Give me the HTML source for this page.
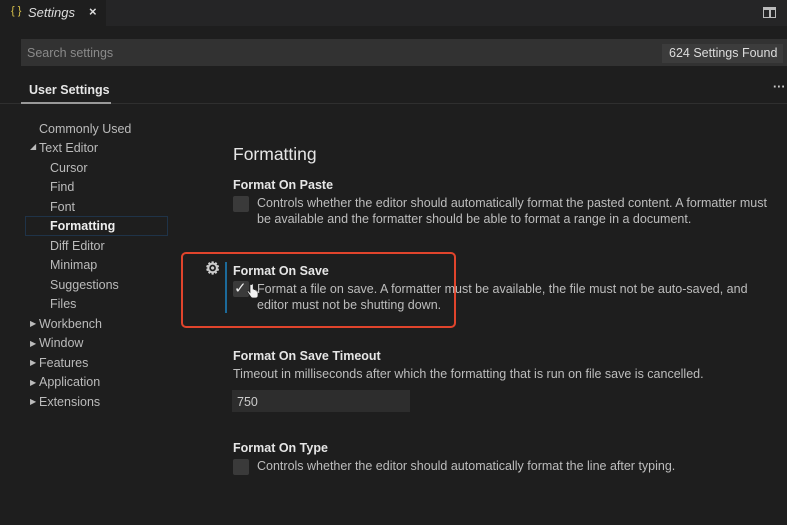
<!DOCTYPE html>
<html><head><style>
*{margin:0;padding:0;box-sizing:border-box}
body{width:787px;height:525px;background:#1e1e1e;font-family:"Liberation Sans",sans-serif;color:#ccc;position:relative;overflow:hidden;font-size:12.5px}
.a{position:absolute;white-space:nowrap}
.tabs{position:absolute;left:0;top:0;width:787px;height:26px;background:#252526}
.tab{position:absolute;left:0;top:0;width:106px;height:26px;background:#1e1e1e}
.nav .a{color:#bbb}
.cb{position:absolute;width:16px;height:16px;background:#3a3a3a;border-radius:2px}
.t{font-weight:bold;color:#e6e6e6}
.d{color:#bdbdbd;line-height:16px}
</style></head><body>
<div class="tabs"><div class="tab"></div>
<span class="a" style="left:11px;top:5px;color:#d7c04a;font-size:11px">{ }</span>
<span class="a" style="left:28px;top:5px;font-style:italic;color:#ddd;font-size:13px">Settings</span>
<span class="a" style="left:89px;top:4px;color:#ddd;font-size:13px;font-weight:bold">×</span>
<div class="a" style="left:763px;top:7px;width:13px;height:11px;border:1.5px solid #bbb;border-top-width:3px"></div>
<div class="a" style="left:769px;top:8px;width:1.5px;height:9px;background:#bbb"></div>
</div>
<div class="a" style="left:21px;top:39px;width:766px;height:27px;background:#323232"></div>
<span class="a" style="left:27px;top:46px;color:#8a8a8a;font-size:12.5px">Search settings</span>
<div class="a" style="left:662px;top:44px;width:121px;height:19px;background:#3c3c3c"></div>
<span class="a" style="left:669px;top:46px;color:#ddd;font-size:12.5px">624 Settings Found</span>
<span class="a" style="left:29px;top:83px;color:#e6e6e6;font-weight:bold;font-size:12.5px">User Settings</span>
<div class="a" style="left:0;top:103px;width:787px;height:1px;background:#2f2f2f"></div>
<div class="a" style="left:21px;top:102px;width:90px;height:2px;background:#999"></div>
<span class="a" style="left:773px;top:80px;color:#ccc;font-weight:bold">···</span>
<div class="a" style="left:25px;top:216px;width:143px;height:20px;border:1px solid #1f3348"></div>
<div class="nav">
<span class="a" style="left:39px;top:122px">Commonly Used</span>
<span class="a" style="left:30px;top:142px;font-size:8px">◢</span>
<span class="a" style="left:39px;top:141px">Text Editor</span>
<span class="a" style="left:50px;top:161px">Cursor</span>
<span class="a" style="left:50px;top:180px">Find</span>
<span class="a" style="left:50px;top:200px">Font</span>
<span class="a" style="left:50px;top:219px;font-weight:bold;color:#eee">Formatting</span>
<span class="a" style="left:50px;top:239px">Diff Editor</span>
<span class="a" style="left:50px;top:258px">Minimap</span>
<span class="a" style="left:50px;top:278px">Suggestions</span>
<span class="a" style="left:50px;top:297px">Files</span>
<span class="a" style="left:30px;top:319px;font-size:8px">▶</span><span class="a" style="left:39px;top:317px">Workbench</span>
<span class="a" style="left:30px;top:339px;font-size:8px">▶</span><span class="a" style="left:39px;top:336px">Window</span>
<span class="a" style="left:30px;top:358px;font-size:8px">▶</span><span class="a" style="left:39px;top:356px">Features</span>
<span class="a" style="left:30px;top:378px;font-size:8px">▶</span><span class="a" style="left:39px;top:375px">Application</span>
<span class="a" style="left:30px;top:397px;font-size:8px">▶</span><span class="a" style="left:39px;top:395px">Extensions</span>
</div>
<span class="a" style="left:233px;top:144px;font-size:17.5px;color:#e6e6e6">Formatting</span>
<span class="a t" style="left:233px;top:178px">Format On Paste</span>
<div class="cb" style="left:233px;top:196px"></div>
<div class="a d" style="left:257px;top:195px">Controls whether the editor should automatically format the pasted content. A formatter must<br>be available and the formatter should be able to format a range in a document.</div>
<div class="a" style="left:181px;top:252px;width:275px;height:76px;border:2px solid #e0442c;border-radius:5px"></div>
<span class="a" style="left:205px;top:259px;font-size:17px;color:#ccc;font-weight:bold">⚙</span>
<div class="a" style="left:225px;top:262px;width:2px;height:51px;background:#1c6a9a"></div>
<span class="a t" style="left:233px;top:264px">Format On Save</span>
<div class="cb" style="left:233px;top:281px"></div>
<span class="a" style="left:234px;top:279px;color:#eee;font-size:15px">✓</span>
<svg class="a" style="left:247px;top:283px" width="12" height="16" viewBox="0 0 12 16"><path d="M3 1.5v8l-1.5-1.5c-.8-.6-1.6.3-1 1l3 4.5c.5.8 1.3 1.5 2.5 1.5h2.5c1.5 0 2.5-1 2.5-2.5v-4c0-.8-1.2-.8-1.2 0v-1c0-.8-1.2-.8-1.2 0v-.5c0-.8-1.2-.8-1.2 0v-.5c0-.8-1.2-.8-1.2 0v-5c0-1-1.4-1-1.4 0z" fill="#f2f2f2" stroke="#222" stroke-width=".7"/></svg>
<div class="a d" style="left:257px;top:281px">Format a file on save. A formatter must be available, the file must not be auto-saved, and<br>editor must not be shutting down.</div>
<span class="a t" style="left:233px;top:349px">Format On Save Timeout</span>
<span class="a d" style="left:233px;top:366px">Timeout in milliseconds after which the formatting that is run on file save is cancelled.</span>
<div class="a" style="left:232px;top:390px;width:178px;height:22px;background:#2d2d2d"></div>
<span class="a" style="left:237px;top:395px;color:#ccc">750</span>
<span class="a t" style="left:233px;top:441px">Format On Type</span>
<div class="cb" style="left:233px;top:459px"></div>
<span class="a d" style="left:257px;top:458px">Controls whether the editor should automatically format the line after typing.</span>
</body></html>
